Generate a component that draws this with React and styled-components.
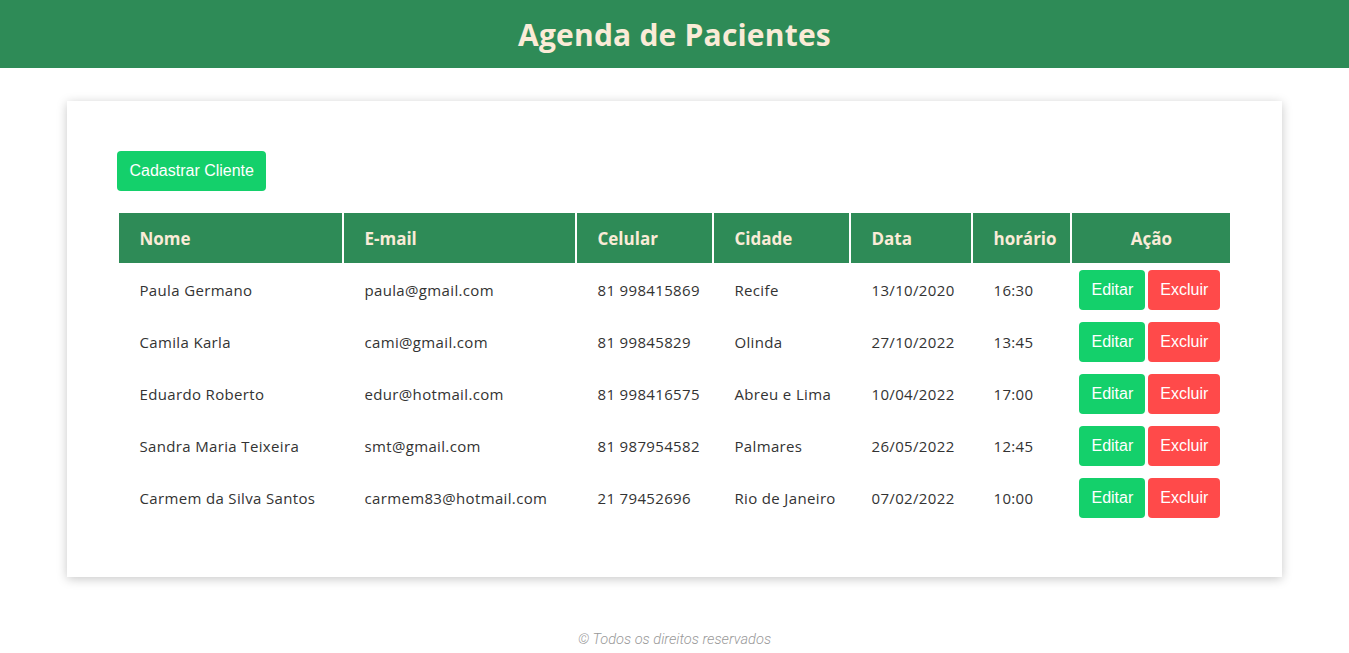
import React from 'react';
import styled, { createGlobalStyle } from 'styled-components';

const GlobalStyle = createGlobalStyle`
  body {
    margin: 0;
    background: #fff;
    font-family: 'Open Sans', 'Lato', sans-serif;
  }
`;

const Header = styled.header`
  height: 68px;
  background: #2e8b57;
  display: flex;
  align-items: center;
  justify-content: center;
  h1 {
    margin: 0;
    color: #faebd7;
    font-family: 'Open Sans', sans-serif;
    font-weight: 700;
    font-size: 30px;
    letter-spacing: 0.2px;
  }
`;

const Card = styled.main`
  width: 90%;
  margin: 33px auto 0;
  padding: 50px 50px 52px;
  box-sizing: border-box;
  background: #fff;
  box-shadow: 0 2px 10px rgba(0, 0, 0, 0.22);
`;

const Button = styled.button`
  border: none;
  border-radius: 4px;
  color: #fff;
  font-family: 'Liberation Sans', Arial, sans-serif;
  font-size: 16px;
  height: 40px;
  padding: 0 12px;
  cursor: pointer;
  background: ${({ $variant }) => ($variant === 'danger' ? '#ff4a4a' : '#14d06b')};
`;

const Table = styled.table`
  width: 100%;
  margin-top: 20px;
  border-spacing: 2px;
  table-layout: fixed;
  th {
    height: 50px;
    background: #2e8b57;
    color: #faebd7;
    font-weight: 700;
    font-size: 17px;
    text-align: left;
    padding: 0 20px;
  }
  th.center {
    text-align: center;
  }
  td {
    height: 50px;
    padding: 0 20px;
    color: #333;
    font-size: 15px;
    letter-spacing: 0.35px;
    white-space: nowrap;
  }
  td.actions {
    padding: 0 0 0 7px;
    letter-spacing: 0;
  }
`;

const Actions = styled.div`
  display: flex;
  gap: 3px;
`;

const Footer = styled.footer`
  text-align: center;
  margin-top: 53px;
  padding-bottom: 8px;
  color: #999;
  font-family: 'Roboto', sans-serif;
  font-style: italic;
  font-weight: 300;
  font-size: 14.6px;
`;

const pacientes = [
  ['Paula Germano', 'paula@gmail.com', '81 998415869', 'Recife', '13/10/2020', '16:30'],
  ['Camila Karla', 'cami@gmail.com', '81 99845829', 'Olinda', '27/10/2022', '13:45'],
  ['Eduardo Roberto', 'edur@hotmail.com', '81 998416575', 'Abreu e Lima', '10/04/2022', '17:00'],
  ['Sandra Maria Teixeira', 'smt@gmail.com', '81 987954582', 'Palmares', '26/05/2022', '12:45'],
  ['Carmem da Silva Santos', 'carmem83@hotmail.com', '21 79452696', 'Rio de Janeiro', '07/02/2022', '10:00'],
];

const widths = [223, 231, 135, 135, 120, 97, 158];

export default function App() {
  return (
    <>
      <GlobalStyle />
      <Header>
        <h1>Agenda de Pacientes</h1>
      </Header>
      <Card>
        <Button>Cadastrar Cliente</Button>
        <Table>
          <colgroup>
            {widths.map((w, i) => (
              <col key={i} style={{ width: w }} />
            ))}
          </colgroup>
          <thead>
            <tr>
              <th>Nome</th>
              <th>E-mail</th>
              <th>Celular</th>
              <th>Cidade</th>
              <th>Data</th>
              <th>horário</th>
              <th className="center">Ação</th>
            </tr>
          </thead>
          <tbody>
            {pacientes.map((p) => (
              <tr key={p[1]}>
                {p.map((v, i) => (
                  <td key={i}>{v}</td>
                ))}
                <td className="actions">
                  <Actions>
                    <Button>Editar</Button>
                    <Button $variant="danger">Excluir</Button>
                  </Actions>
                </td>
              </tr>
            ))}
          </tbody>
        </Table>
      </Card>
      <Footer>© Todos os direitos reservados</Footer>
    </>
  );
}
